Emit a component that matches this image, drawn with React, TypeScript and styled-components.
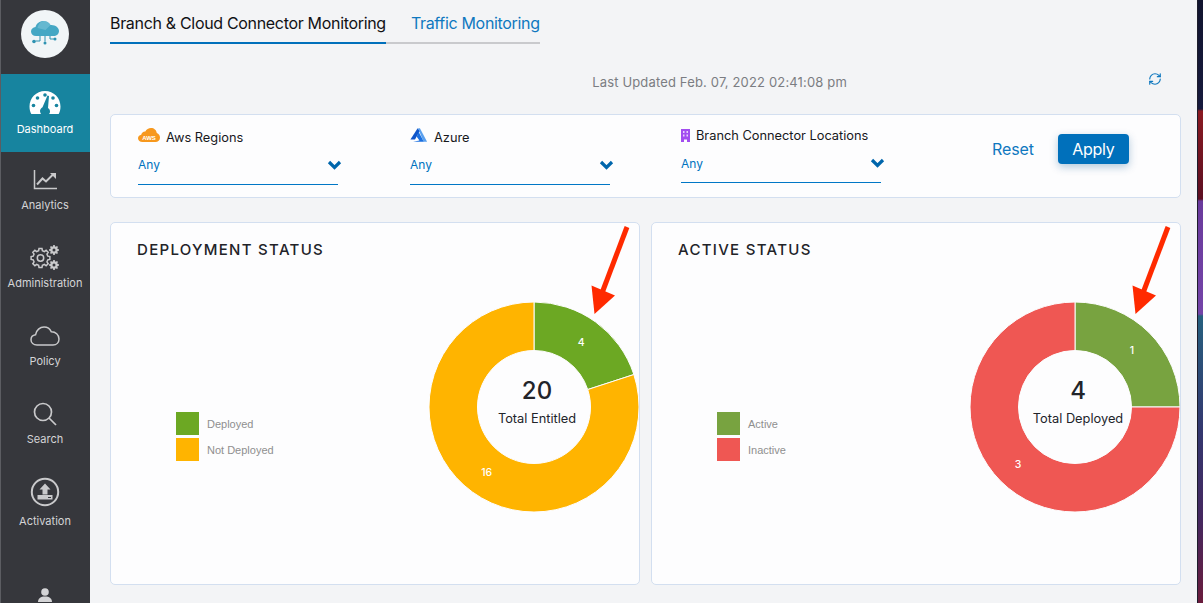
import React from 'react'
import styled, { createGlobalStyle } from 'styled-components'
import { RefreshCw } from 'lucide-react'

const GlobalStyle = createGlobalStyle`
  html, body {
    margin: 0;
    height: 100%;
    overflow: hidden;
    background: #f3f4f6;
    font-family: Inter, "Liberation Sans", sans-serif;
  }
  * { box-sizing: border-box; }
`

const Shell = styled.div`
  display: flex;
  width: 1203px;
  height: 603px;
  overflow: hidden;
`

const Sidebar = styled.nav`
  flex: 0 0 90px;
  height: 603px;
  overflow: hidden;
  background: #36373c;
  border-left: 1px solid #5c5d62;
`

const LogoArea = styled.div`
  display: flex;
  justify-content: center;
  height: 74px;
  padding-top: 10px;
  margin-left: -1px;
`

const LogoCircle = styled.div`
  display: flex;
  align-items: center;
  justify-content: center;
  width: 48px;
  height: 48px;
  border-radius: 50%;
  background: #f1f5f7;
`

const NavItem = styled.div<{ $active?: boolean; $height?: number }>`
  display: flex;
  flex-direction: column;
  align-items: center;
  height: ${p => p.$height || 78}px;
  margin-left: -1px;
  padding-top: ${p => (p.$active ? 15 : 14)}px;
  background: ${p => (p.$active ? '#17849f' : 'transparent')};
  color: ${p => (p.$active ? '#ffffff' : '#d4d4d6')};
`

const NavIcon = styled.div<{ $gap?: number }>`
  display: flex;
  align-items: center;
  justify-content: center;
  height: 28px;
  margin-bottom: ${p => p.$gap ?? 4}px;
`

const NavLabel = styled.span`
  font-size: 11px;
  line-height: 14px;
  white-space: nowrap;
`

const Main = styled.main`
  flex: 1;
  min-width: 0;
  padding: 0 16px 0 20px;
`

const TabBar = styled.div`
  display: flex;
  width: fit-content;
  height: 44px;
  border-bottom: 2px solid #c9cacd;
`

const Tab = styled.div<{ $active?: boolean }>`
  height: 44px;
  padding-top: 14px;
  margin-right: ${p => (p.$active ? '25px' : '0')};
  border-bottom: ${p => (p.$active ? '2px solid #0070bb' : 'none')};
  color: ${p => (p.$active ? '#111114' : '#0f78bf')};
  font-size: 16px;
  line-height: 19px;
  letter-spacing: -0.32px;
  white-space: nowrap;
`

const UpdatedRow = styled.div`
  display: flex;
  justify-content: flex-end;
  height: 70px;
  padding: 28px 19px 0 0;
  color: #7b7d82;
`

const UpdatedText = styled.span`
  margin-right: 301px;
  margin-top: 2px;
  font-size: 13px;
  line-height: 16px;
  letter-spacing: 0.16px;
`

const FilterCard = styled.section`
  display: grid;
  grid-template-columns: 272px 271px 200px 1fr;
  height: 84px;
  padding: 11px 0 0 27px;
  background: #fdfdfe;
  border: 1px solid #d3dff0;
  border-radius: 5px;
`

const Filter = styled.div`
  display: flex;
  flex-direction: column;
`

const FilterLabel = styled.div<{ $compact?: boolean }>`
  display: flex;
  align-items: center;
  gap: 6px;
  height: ${p => (p.$compact ? 18 : 22)}px;
  color: #17181c;
  font-size: 12.8px;
  white-space: nowrap;

  svg {
    margin-bottom: ${p => (p.$compact ? 0 : 5)}px;
  }
`

const Select = styled.div<{ $compact?: boolean }>`
  display: flex;
  align-items: center;
  justify-content: space-between;
  width: 200px;
  height: ${p => (p.$compact ? 38 : 37)}px;
  margin-top: ${p => (p.$compact ? 1 : 0)}px;
  padding-bottom: ${p => (p.$compact ? 1 : 3)}px;
  border-bottom: 1px solid #0077c6;
  color: #0073bf;
  font-size: 12px;
`

const Chevron = styled.svg`
  margin-right: -4px;
`

const Actions = styled.div`
  display: flex;
  align-items: flex-start;
  padding: 8px 0 0 111px;
`

const ResetButton = styled.button`
  height: 30px;
  padding: 0;
  margin-right: 24px;
  border: none;
  background: transparent;
  color: #0f78bf;
  font: 16px Inter, sans-serif;
  letter-spacing: -0.1px;
`

const ApplyButton = styled.button`
  width: 71px;
  height: 30px;
  padding: 0;
  border: none;
  border-radius: 4px;
  background: #0070bb;
  box-shadow: 0 3px 8px rgba(0, 80, 140, 0.3);
  color: #ffffff;
  font: 16px Inter, sans-serif;
  letter-spacing: -0.3px;
`

const CardGrid = styled.div`
  display: grid;
  grid-template-columns: 530px 530px;
  gap: 11px;
  margin-top: 24px;
`

const Card = styled.section`
  position: relative;
  height: 363px;
  padding: 18px 0.5px 0 26px;
  background: #fdfdfe;
  border: 1px solid #d3dff0;
  border-radius: 5px;
`

const CardTitle = styled.h2`
  margin: 0;
  color: #222328;
  font-size: 15px;
  font-weight: 500;
  line-height: 18px;
  letter-spacing: 1.3px;
`

const ChartRow = styled.div`
  display: flex;
  justify-content: space-between;
  margin-top: 43px;
`

const Legend = styled.ul`
  margin: 110px 0 0 39px;
  padding: 0;
  list-style: none;
`

const LegendItem = styled.li`
  display: flex;
  align-items: center;
  gap: 8px;
  margin-bottom: 3px;
  color: #8f8f8f;
  font-family: "Liberation Sans", Arial, sans-serif;
  font-size: 11px;
`

const Swatch = styled.span<{ $color: string }>`
  width: 23px;
  height: 23px;
  background: ${p => p.$color};
`

const DonutWrap = styled.div`
  position: relative;
  width: 210px;
  height: 210px;
`

const DonutCenter = styled.div`
  position: absolute;
  top: 74px;
  left: 3.5px;
  width: 210px;
  text-align: center;
  color: #22242a;
`

const DonutTotal = styled.div`
  font-size: 24px;
  font-weight: 500;
  line-height: 30px;
`

const DonutCaption = styled.div`
  margin-top: 5px;
  font-size: 12.8px;
  line-height: 16px;
`

const ArrowMark = styled.svg`
  position: absolute;
  top: 2px;
  left: 478px;
`

const Wallpaper = styled.div`
  flex: 0 0 6px;
  height: 603px;
  border-left: 1px solid #1d1d2b;
  background: linear-gradient(
    180deg,
    #11142f 0,
    #171a3d 109px,
    #8a1a22 111px,
    #5c0f22 199px,
    #6a3a9c 201px,
    #7444a8 314px,
    #27607f 316px,
    #33376f 430px,
    #45275f 520px,
    #6a1c3c 603px
  );
`

const GaugeIcon = () => (
  <svg width="32" height="26" viewBox="0 0 32 26">
    <path
      fill="#fff"
      d="M16 1C7.2 1 .5 8 .5 16.500c0 3 .7 5.500 1.800 7.500H12a5.500 5.500 0 0 1-1-3c0-1.500 1-3 2.500-3.800L18.500 5.500l1.500.5-1 12c1.300.9 2 2.200 2 3.500 0 1-.3 2-1 2.500h9.700c1.100-2 1.800-4.500 1.800-7.500C31.500 8 24.800 1 16 1Z"
    />
    <g fill="#17849f">
      <circle cx="16" cy="5" r="1.800" />
      <circle cx="8.500" cy="8" r="1.800" />
      <circle cx="24" cy="8" r="1.800" />
      <circle cx="4.500" cy="15.500" r="1.800" />
      <circle cx="27.500" cy="15.500" r="1.800" />
    </g>
  </svg>
)

const AnalyticsIcon = () => (
  <svg width="24" height="20" viewBox="0 0 24 20" fill="none" stroke="#c9c9cb">
    <path d="M1.500 0v18.500H24" strokeWidth="1.500" />
    <path d="M4 14.500l5.500-6 3.500 3 7-7" strokeWidth="2" />
    <path d="M17 3h6v6z" fill="#c9c9cb" stroke="none" />
  </svg>
)

// teeth on a ring, good enough for the small settings glyph
const gearPath = (cx: number, cy: number, outer: number, inner: number, teeth: number) => {
  const points: string[] = []
  const step = (Math.PI * 2) / teeth
  for (let i = 0; i < teeth; i++) {
    const a = i * step
    const offsets = [
      [-0.32, inner],
      [-0.2, outer],
      [0.2, outer],
      [0.32, inner],
    ]
    offsets.forEach(([o, r]) => {
      const angle = a + o * step
      points.push(`${(cx + Math.cos(angle) * r).toFixed(2)},${(cy + Math.sin(angle) * r).toFixed(2)}`)
    })
  }
  return `M${points.join('L')}Z`
}

const GearsIcon = () => (
  <svg width="30" height="28" viewBox="0 0 30 28">
    <path d={gearPath(10.5, 14, 9.500, 7.500, 8)} fill="none" stroke="#c9c9cb" strokeWidth="1.500" />
    <circle cx="10.500" cy="14" r="3.200" fill="none" stroke="#c9c9cb" strokeWidth="1.500" />
    <path d={gearPath(24, 6, 5, 3.800, 8)} fill="#c9c9cb" />
    <circle cx="24" cy="6" r="1.500" fill="#36373c" />
    <path d={gearPath(24, 21, 5, 3.800, 8)} fill="#c9c9cb" />
    <circle cx="24" cy="21" r="1.500" fill="#36373c" />
  </svg>
)

const CloudIcon = () => (
  <svg width="30" height="20" viewBox="0 0 30 20" fill="none" stroke="#c9c9cb" strokeWidth="1.500">
    <path d="M7 19C3.500 19 1 16.800 1 13.800c0-2.600 1.900-4.600 4.500-5C6.300 4 10 1 14 1c3.400 0 6.100 1.900 7.300 4.800C25.500 5.700 29 8.800 29 13c0 3.500-2.500 6-6 6Z" />
  </svg>
)

const SearchIcon = () => (
  <svg width="24" height="24" viewBox="0 0 24 24" fill="none" stroke="#c9c9cb" strokeWidth="1.700">
    <circle cx="10" cy="10" r="8.500" />
    <path d="M16 16l7 7" />
  </svg>
)

const ActivationIcon = () => (
  <svg width="30" height="30" viewBox="0 0 30 30">
    <circle cx="15" cy="15" r="13.200" fill="none" stroke="#c9c9cb" strokeWidth="2" />
    <path d="M15 6.500l5.500 6h-3v5h-5v-5h-3z" fill="#c9c9cb" />
    <path d="M7.500 18h15v4.500h-15z" fill="#c9c9cb" />
    <path d="M18 20.500h3" stroke="#36373c" strokeWidth="1" />
  </svg>
)

const UserIcon = () => (
  <svg width="14" height="14" viewBox="0 0 14 14">
    <circle cx="7" cy="4" r="3.800" fill="#d4d4d6" />
    <path d="M0 14c0-3.500 2.500-5.500 7-5.500s7 2 7 5.500z" fill="#d4d4d6" />
  </svg>
)

const LogoIcon = () => (
  <svg width="30" height="28" viewBox="0 0 30 28">
    <path
      fill="#45a7c4"
      d="M6 16c-3 0-5-2-5-4.500C1 9 3 7.200 5.500 7 6.500 3.500 9.500 1 13.500 1c3 0 5.500 1.500 7 4 4.500-.5 8.500 2.500 8.500 6 0 3-2.500 5-5.500 5z"
    />
    <path fill="#7cc3d8" d="M13.500 1c3 0 5.500 1.500 7 4l-5 5-8-2c1-4 3-7 6-7z" opacity=".6" />
    <g fill="none" stroke="#2f93b2" strokeWidth="1">
      <path d="M10 16v5H5.500" />
      <path d="M15 16v5.500" />
      <path d="M20 16v3h4" />
    </g>
    <g fill="#2f93b2">
      <circle cx="4" cy="21.500" r="1.800" />
      <circle cx="15" cy="23" r="1.500" />
      <circle cx="25" cy="19" r="1.500" />
    </g>
  </svg>
)

const AwsIcon = () => (
  <svg width="22" height="16" viewBox="0 0 22 16">
    <path
      fill="#f7981d"
      d="M4.500 15C2 15 0 13.500 0 11.300 0 9.400 1.300 8 3.200 7.700 3.600 5.600 5.400 4.300 7.300 4.500 8.400 2.300 10.600 1 13 1c3 0 5.400 2 5.800 5C20.700 6.500 22 8.500 22 10.700 22 13.200 20 15 17.500 15z"
    />
    <text x="11" y="12.500" fill="#fff" fontFamily="Liberation Sans" fontSize="6" fontWeight="700" textAnchor="middle">
      AWS
    </text>
  </svg>
)

const AzureIcon = () => (
  <svg width="18" height="14" viewBox="0 0 20 15">
    <path fill="#0f55c9" d="M8.500 0l-8 12.500h5L11 3z" />
    <path fill="#1b6fe0" d="M9.500 4l6 11H3.500l7-1.500-3-4z" />
    <path fill="#5aa0ee" d="M9 0h2l8 15h-4z" />
  </svg>
)

const BuildingIcon = () => (
  <svg width="9" height="13" viewBox="0 0 9 13">
    <path fill="#a24df0" d="M0 0h9v13H6v-2.500H3V13H0z" />
    <path fill="#e8d2fb" d="M2 2h1.500v2H2zM5.500 2H7v2H5.500zM2 5.500h1.500v2H2zM5.500 5.500H7v2H5.500z" />
  </svg>
)

const ChevronIcon = () => (
  <Chevron width="15" height="10" viewBox="0 0 15 10">
    <path d="M2 2l5.500 5.500L13 2" fill="none" stroke="#0066ac" strokeWidth="3.200" />
  </Chevron>
)

const RedArrow = () => (
  <ArrowMark width="42" height="90" viewBox="0 0 42 90">
    <path d="M38 2L13 68" stroke="#ff2a00" strokeWidth="5" />
    <path d="M5.500 89L2.500 60.500 26 70.500z" fill="#ff2a00" />
  </ArrowMark>
)

interface Slice {
  label: string
  value: number
  color: string
}

const polar = (angle: number, r: number) => {
  const rad = (angle * Math.PI) / 180
  return [105 + Math.sin(rad) * r, 105 - Math.cos(rad) * r]
}

const slicePath = (from: number, to: number) => {
  const large = to - from > 180 ? 1 : 0
  const [ax, ay] = polar(from, 105)
  const [bx, by] = polar(to, 105)
  const [cx, cy] = polar(to, 56.5)
  const [dx, dy] = polar(from, 56.5)
  return `M${ax} ${ay}A105 105 0 ${large} 1 ${bx} ${by}L${cx} ${cy}A56.5 56.5 0 ${large} 0 ${dx} ${dy}Z`
}

const Donut: React.FC<{ slices: Slice[] }> = ({ slices }) => {
  const total = slices.reduce((sum, s) => sum + s.value, 0)
  let angle = 0
  return (
    <svg width="210" height="210" viewBox="0 0 210 210">
      {slices.map(slice => {
        const from = angle
        const to = angle + (slice.value / total) * 360
        angle = to
        const [tx, ty] = polar((from + to) / 2, 80.5)
        return (
          <g key={slice.label}>
            <path d={slicePath(from, to)} fill={slice.color} stroke="#fdfdfe" strokeWidth="1" />
            <text
              x={tx}
              y={ty + 4}
              fill="#fff"
              fontFamily="Inter, sans-serif"
              fontSize="10.5"
              fontWeight="500"
              textAnchor="middle"
            >
              {slice.value}
            </text>
          </g>
        )
      })}
    </svg>
  )
}

const StatusCard: React.FC<{ title: string; caption: string; slices: Slice[] }> = ({
  title,
  caption,
  slices,
}) => (
  <Card>
    <CardTitle>{title}</CardTitle>
    <ChartRow>
      <Legend>
        {slices.map(slice => (
          <LegendItem key={slice.label}>
            <Swatch $color={slice.color} />
            {slice.label}
          </LegendItem>
        ))}
      </Legend>
      <DonutWrap>
        <Donut slices={slices} />
        <DonutCenter>
          <DonutTotal>{slices.reduce((sum, s) => sum + s.value, 0)}</DonutTotal>
          <DonutCaption>{caption}</DonutCaption>
        </DonutCenter>
      </DonutWrap>
    </ChartRow>
    <RedArrow />
  </Card>
)

const navItems = [
  { label: 'Dashboard', icon: <GaugeIcon />, active: true, gap: 5 },
  { label: 'Analytics', icon: <AnalyticsIcon /> },
  { label: 'Administration', icon: <GearsIcon /> },
  { label: 'Policy', icon: <CloudIcon /> },
  { label: 'Search', icon: <SearchIcon /> },
  { label: 'Activation', icon: <ActivationIcon />, gap: 8, height: 103 },
]

const filters = [
  { label: 'Aws Regions', icon: <AwsIcon /> },
  { label: 'Azure', icon: <AzureIcon /> },
  { label: 'Branch Connector Locations', icon: <BuildingIcon />, compact: true },
]

const App: React.FC = () => (
  <Shell>
    <GlobalStyle />
    <Sidebar>
      <LogoArea>
        <LogoCircle>
          <LogoIcon />
        </LogoCircle>
      </LogoArea>
      {navItems.map(item => (
        <NavItem key={item.label} $active={item.active} $height={item.height}>
          <NavIcon $gap={item.gap}>{item.icon}</NavIcon>
          <NavLabel>{item.label}</NavLabel>
        </NavItem>
      ))}
      <NavItem>
        <NavIcon>
          <UserIcon />
        </NavIcon>
      </NavItem>
    </Sidebar>
    <Main>
      <TabBar>
        <Tab $active>Branch &amp; Cloud Connector Monitoring</Tab>
        <Tab>Traffic Monitoring</Tab>
      </TabBar>
      <UpdatedRow>
        <UpdatedText>Last Updated Feb. 07, 2022 02:41:08 pm</UpdatedText>
        <RefreshCw size={14} color="#0f78bf" strokeWidth={2} />
      </UpdatedRow>
      <FilterCard>
        {filters.map(filter => (
          <Filter key={filter.label}>
            <FilterLabel $compact={filter.compact}>
              {filter.icon}
              {filter.label}
            </FilterLabel>
            <Select $compact={filter.compact}>
              Any
              <ChevronIcon />
            </Select>
          </Filter>
        ))}
        <Actions>
          <ResetButton>Reset</ResetButton>
          <ApplyButton>Apply</ApplyButton>
        </Actions>
      </FilterCard>
      <CardGrid>
        <StatusCard
          title="DEPLOYMENT STATUS"
          caption="Total Entitled"
          slices={[
            { label: 'Deployed', value: 4, color: '#6ca823' },
            { label: 'Not Deployed', value: 16, color: '#ffb400' },
          ]}
        />
        <StatusCard
          title="ACTIVE STATUS"
          caption="Total Deployed"
          slices={[
            { label: 'Active', value: 1, color: '#78a340' },
            { label: 'Inactive', value: 3, color: '#ef5753' },
          ]}
        />
      </CardGrid>
    </Main>
    <Wallpaper />
  </Shell>
)

export default App
